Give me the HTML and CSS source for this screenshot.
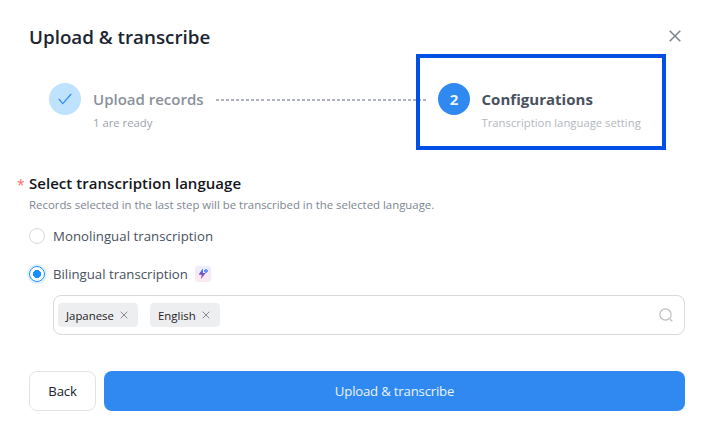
FILE: index.html
```html
<!DOCTYPE html>
<html lang="en">
<head>
<meta charset="utf-8">
<title>Upload &amp; transcribe</title>
<link rel="stylesheet" href="styles.css">
</head>
<body>
<main class="dialog">
  <header class="header">
    <h1 class="title">Upload &amp; transcribe</h1>
    <svg class="close" viewBox="0 0 12 12"><path d="M.7.7l10.6 10.6M11.3.7L.7 11.3"/></svg>
  </header>
  <section class="steps">
    <div class="step done">
      <div class="circle"><svg width="14" height="12" viewBox="0 0 14 12"><path d="M.8 6l4 4.6L13.2 1"/></svg></div>
      <div class="step-text">
        <div class="step-title">Upload records</div>
        <div class="step-note">1 are ready</div>
      </div>
    </div>
    <div class="line"></div>
    <div class="step active">
      <div class="circle">2</div>
      <div class="step-text">
        <div class="step-title">Configurations</div>
        <div class="step-note">Transcription language setting</div>
      </div>
      <div class="highlight"></div>
    </div>
  </section>
  <section class="form">
    <h2 class="label"><span class="star">*</span>Select transcription language</h2>
    <p class="hint">Records selected in the last step will be transcribed in the selected language.</p>
    <div class="option mono"><span class="radio"></span><span>Monolingual transcription</span></div>
    <div class="option second"><span class="radio checked"></span><span>Bilingual transcription</span>
      <svg class="badge" viewBox="0 0 16 16">
        <defs>
          <linearGradient id="bg" x1="0" y1="0" x2="0" y2="1"><stop stop-color="#e8edff"/><stop offset="1" stop-color="#ffe9ee"/></linearGradient>
          <linearGradient id="bolt" x1="0" y1="0" x2="0" y2="1"><stop stop-color="#3868f5"/><stop offset=".5" stop-color="#7050d8"/><stop offset="1" stop-color="#f0507c"/></linearGradient>
        </defs>
        <rect width="16" height="16" rx="3" fill="url(#bg)"/>
        <path d="M7.8 2.500L3.600 8.800h3L5.800 13.300l4.900-6.200H7.900z" fill="url(#bolt)"/>
        <path d="M11 3l.7 1.300 1.300.7-1.300.7-.7 1.300-.7-1.300L9 5l1.300-.7z" fill="#5c8bff" stroke="#5c8bff" stroke-width="1"/>
      </svg>
    </div>
    <div class="select">
      <span class="tag jp"><span>Japanese</span><svg viewBox="0 0 8 8"><path d="M.7.700l6.600 6.600M7.300.7L.7 7.300"/></svg></span>
      <span class="tag en"><span>English</span><svg viewBox="0 0 8 8"><path d="M.7.700l6.600 6.600M7.300.7L.7 7.300"/></svg></span>
      <svg class="search" viewBox="0 0 14 14"><circle cx="6.500" cy="6.500" r="5.600"/><path d="M11 11.200l2.300 2.100"/></svg>
    </div>
  </section>
  <footer class="footer">
    <button class="back">Back</button>
    <button class="submit">Upload &amp; transcribe</button>
  </footer>
</main>
</body>
</html>
```
FILE: styles.css
```css
* { box-sizing: border-box; }
body { margin: 0; background: #fff; font-family: "Open Sans", "Noto Sans", sans-serif; white-space: nowrap; }
.dialog { width: 715px; height: 436px; padding: 25px 30px 0 29px; }
.header { display: flex; justify-content: space-between; align-items: center; height: 24px; }
.title { margin: 0; font-size: 18.8px; font-weight: 600; line-height: 24px; color: #1b2532; letter-spacing: 0; }
.close { width: 12px; height: 12px; margin: 0 4px 2px 0; fill: none; stroke: #7b838e; stroke-width: 1.5; }
.steps { display: flex; height: 50px; margin: 34px 0 0 20px; }
.step { display: flex; gap: 12px; position: relative; }
.done { width: 155px; }
.circle { flex: none; display: flex; align-items: center; justify-content: center; width: 32px; height: 32px; border-radius: 50%; font-size: 15px; font-weight: 700; }
.done .circle { background: #bfe3ff; }
.done .circle svg { fill: none; stroke: #3489f4; stroke-width: 1.2; }
.active .circle { background: #3089f1; color: #eaf4ff; }
.active { gap: 11.500px; }
.step-title { height: 32px; line-height: 32px; font-size: 15px; font-weight: 600; color: #89919b; }
.active .step-title { color: #48515e; font-weight: 700; letter-spacing: .03px; }
.step-note { height: 16px; line-height: 16px; font-size: 11.300px; color: #b2b7be; }
.done .step-note { color: #9ba2aa; }
.line { width: 210px; height: 2px; margin: 16px 12px 0; background: repeating-linear-gradient(90deg, #afb4ba 0 3px, transparent 3px 5.050px); }
.highlight { position: absolute; left: -22px; top: -29px; width: 250px; height: 96px; border: 4px solid #0050e6; }
.form { padding-top: 40px; }
.label { position: relative; margin: 0; height: 20px; line-height: 20px; font-size: 15px; font-weight: 600; color: #14161b; letter-spacing: .04px; }
.star { position: absolute; left: -12px; top: 2px; font-size: 14px; font-weight: 400; color: #ff6b66; }
.hint { margin: 3px 0 0; height: 18px; line-height: 18px; font-size: 11.400px; color: #7d8690; }
.option { display: flex; align-items: center; gap: 8px; height: 22px; margin-top: 11px; font-size: 13.200px; line-height: 22px; color: #48515e; }
.mono { letter-spacing: .05px; }
.option.second { margin-top: 16px; }
.radio { width: 16px; height: 16px; border: 1px solid #d9d9d9; border-radius: 50%; }
.checked { border-color: #1890ff; background: radial-gradient(circle, #1890ff 0 3.800px, #fff 4.300px); box-shadow: 0 0 0 2px #dff0ff; }
.badge { width: 16px; height: 16px; margin-left: -1px; }
.select { display: flex; align-items: center; gap: 12px; width: 632px; height: 40px; margin: 10px 0 0 24px; padding: 0 11px 0 4px; border: 1px solid #d9d9d9; border-radius: 8px; }
.tag { display: flex; align-items: center; justify-content: space-between; height: 24px; padding: 1px 10px 0 8px; border-radius: 4px; background: #edeeef; font-size: 11.400px; line-height: 22px; color: #1f2226; }
.jp { width: 80px; }
.en { width: 70px; }
.tag svg { width: 8px; height: 8px; margin-bottom: 1px; fill: none; stroke: #858a91; stroke-width: 1; }
.search { width: 14px; height: 14px; margin-left: auto; fill: none; stroke: #bdbdbd; stroke-width: 1.200; }
.footer { display: flex; gap: 8px; margin-top: 36px; }
.footer button { height: 40px; padding: 0; border-radius: 8px; font: 400 13.200px "Open Sans", sans-serif; }
.back { width: 67px; border: 1px solid #e1e3e5; background: #fff; color: #20252c; letter-spacing: -.2px; }
.submit { width: 581px; border: 0; background: #3089f1; color: #eaf4ff; letter-spacing: -.2px; }
.footer .back, .footer .submit { letter-spacing: -.2px; }
```
